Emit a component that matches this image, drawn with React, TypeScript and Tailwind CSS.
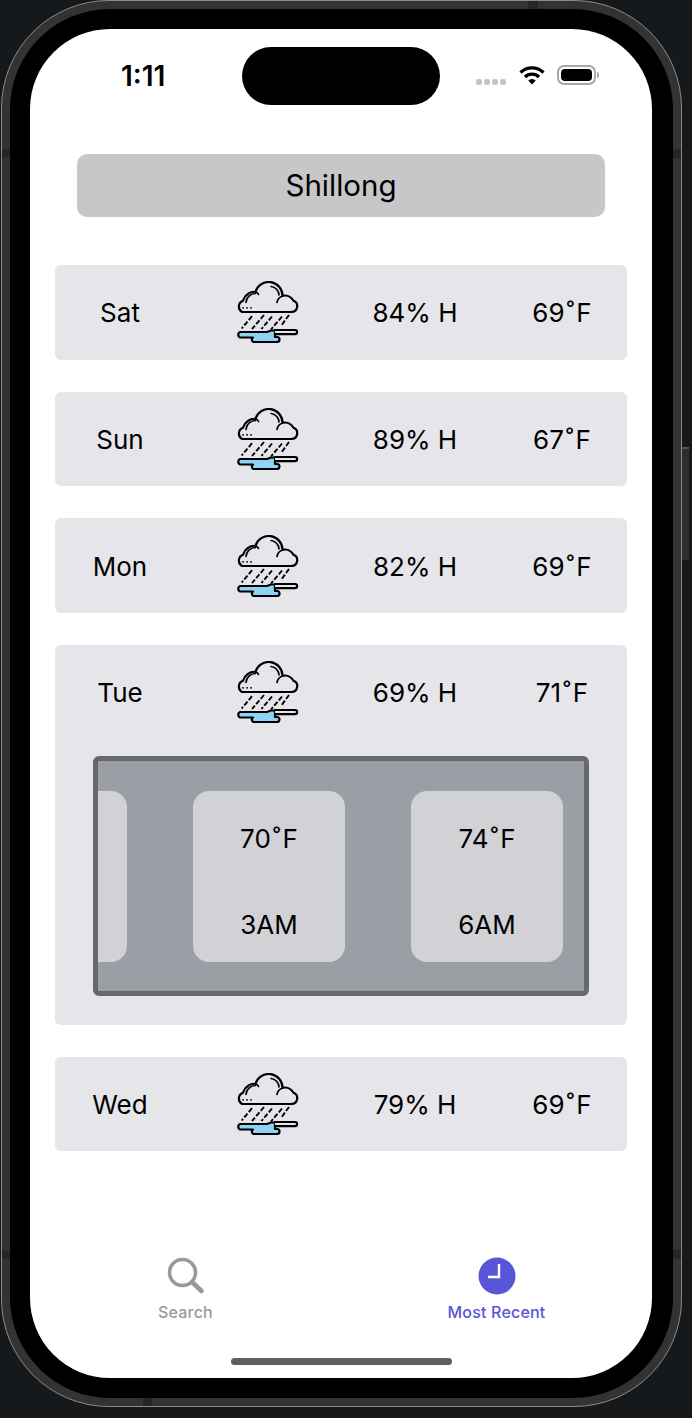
import React from "react";

// the forecast rows shown on the page
const days = [
  { day: "Sat", humidity: "84% H", temp: "69" },
  { day: "Sun", humidity: "89% H", temp: "67" },
  { day: "Mon", humidity: "82% H", temp: "69" },
  { day: "Tue", humidity: "69% H", temp: "71", open: true },
  { day: "Wed", humidity: "79% H", temp: "69" },
];

const RainIcon: React.FC = () => (
  <svg viewBox="18 11.500 62 62" className="w-[62px] h-[62px]" fill="none" stroke="#000" strokeWidth="2.200" strokeLinecap="round" strokeLinejoin="round">
    <path d="M23 42.500H72.500a5.800 5.800 0 0 0 2-11.200 10 10 0 0 0-11-5 13.800 13.800 0 0 0-27-4 12 12 0 0 0-12.500 9 6.200 6.200 0 0 0-1 11.200z" fill="#e5e5ea" />
    <path d="M27 33a9.500 9.500 0 0 1 9.500-9M52 17a9 9 0 0 1 8 8.500M58 33a8 8 0 0 1 6-6.500M37 22.500a4 4 0 0 1 2.500 2.500" strokeWidth="1.700" />
    <path d="M24 38.300h.1M28 38.300h.1M32 38.300h.1" strokeWidth="1.800" />
    <path d="M33 46.700l-10.300 12.300M45 45.500l-12 14M53 47l-10.500 12.500M63 47l-11 13M70 45.500l-8 11" strokeWidth="1.900" strokeDasharray="5 2" strokeLinecap="butt" />
    <path d="M21 62.500H48l4-1.500h4v6.500h2a2.500 2.500 0 0 1 0 5H36a2.500 2.500 0 0 1-2-4.500H21a3 3 0 0 1 0-5.500z" fill="#8fd3f4" />
    <path d="M56 60.500H76a2.100 2.100 0 0 1 0 4.200H56" fill="#e5e5ea" />
  </svg>
);

// the ring in the reference sits apart from the digits and the F
const Temp: React.FC<{ value: string }> = ({ value }) => (
  <span>
    {value}
    <span className="mx-[2px]">˚</span>F
  </span>
);

const HourCard: React.FC<{ temp?: string; time?: string; className?: string }> = ({ temp, time, className }) => (
  <div className={`w-[152px] h-[171px] shrink-0 rounded-2xl bg-[#d1d1d6] flex flex-col items-center justify-between pt-[28px] pb-[17px] text-[26px] leading-[40px] ${className || ""}`}>
    <span>{temp && <Temp value={temp} />}</span>
    <span>{time}</span>
  </div>
);

const App: React.FC = () => {
  return (
    <div className="relative w-[692px] h-[1418px] bg-[#16191c] pl-px overflow-hidden font-['Inter',sans-serif] text-black">
      {/* side button */}
      <div className="absolute left-[682px] top-[447px] w-[7px] h-[113px] bg-[#2d2d2d] border-t-2 border-[#555555]" />

      {/* phone body */}
      <div className="relative w-[681px] h-[1407px] rounded-[108px] border border-[#8a8a8a] bg-[#333333] p-[8px]">
        {/* antenna lines on the band */}
        <div className="absolute left-0 top-[148px] w-[8px] h-[9px] bg-[#262626]" />
        <div className="absolute left-0 top-[1249px] w-[8px] h-[9px] bg-[#262626]" />
        <div className="absolute right-0 top-[148px] w-[8px] h-[9px] bg-[#262626]" />
        <div className="absolute right-0 top-[1249px] w-[8px] h-[9px] bg-[#262626]" />
        <div className="absolute left-[526px] top-0 w-[10px] h-[8px] bg-[#262626]" />
        <div className="absolute left-[141px] bottom-0 w-[9px] h-[8px] bg-[#262626]" />

        <div className="relative w-full h-full rounded-[100px] bg-black pt-[20px] pl-[20px]">
          {/* screen */}
          <div className="relative w-[622px] h-[1349px] rounded-[80px] bg-white overflow-hidden flex flex-col">
            <div className="absolute top-[18px] left-[212px] w-[198px] h-[58px] rounded-full bg-black" />

            {/* status bar */}
            <div className="h-[125px] shrink-0 relative">
              <span className="absolute left-[91px] top-[30px] text-[28px] leading-[34px] font-semibold">1:11</span>
              <div className="absolute left-[446px] top-[50px] flex gap-[2px]">
                <span className="w-[6px] h-[6px] rounded-[2px] bg-[#c4c4c4]" />
                <span className="w-[6px] h-[6px] rounded-[2px] bg-[#c4c4c4]" />
                <span className="w-[6px] h-[6px] rounded-[2px] bg-[#c4c4c4]" />
                <span className="w-[6px] h-[6px] rounded-[2px] bg-[#c4c4c4]" />
              </div>
              <svg viewBox="0 0 26 20" className="absolute left-[489px] top-[36px] w-[26px] h-[20px]" fill="none" stroke="#000" strokeWidth="3.200">
                <path d="M1.500 7.500a16.500 16.500 0 0 1 23 0" />
                <path d="M6 12a10 10 0 0 1 14 0" />
                <path d="M13 19.500l-3.800-4a5.500 5.500 0 0 1 7.600 0z" fill="#000" stroke="none" />
              </svg>
              <div className="absolute left-[527px] top-[36px] w-[39px] h-[20px] rounded-[7px] border-2 border-[#a8a8a8] p-[2px]">
                <div className="w-full h-full rounded-[4px] bg-black" />
              </div>
              <span className="absolute left-[567px] top-[43px] w-[2px] h-[6px] rounded-r-full bg-[#a8a8a8]" />
            </div>

            {/* city name */}
            <div className="mx-[47px] h-[63px] shrink-0 rounded-[10px] bg-[#c7c7c9] flex items-center justify-center text-[29.500px]">
              Shillong
            </div>

            {/* forecast list */}
            <div className="mt-[48px] mx-[25px] flex flex-col gap-[32px]">
              {days.map((item) => (
                <div key={item.day} className="rounded-md bg-[#e5e5ea]">
                  <div className="h-[94.670px] grid grid-cols-[130px_166px_128px_148px] items-center text-[26px] text-center">
                    <span className="pt-[1px]">{item.day}</span>
                    <div className="flex justify-center">
                      <RainIcon />
                    </div>
                    <span className="pt-[1px]">{item.humidity}</span>
                    <span className="pl-[18px] pt-[1px]">
                      <Temp value={item.temp} />
                    </span>
                  </div>
                  {item.open && (
                    <div className="mx-[38px] mt-[16px] mb-[29px] h-[240px] rounded-md border-[5px] border-[#686868] bg-[#9a9ea5] flex items-start pt-[30px] gap-[66px] overflow-hidden">
                      <HourCard className="-ml-[123px]" />
                      <HourCard temp="70" time="3AM" />
                      <HourCard temp="74" time="6AM" />
                    </div>
                  )}
                </div>
              ))}
            </div>

            {/* tab bar */}
            <div className="mt-auto grid grid-cols-2 text-[16px] tracking-[0.2px] font-medium pb-[56px]">
              <div className="flex flex-col items-center text-[#999999]">
                <svg viewBox="0 0 38 38" className="w-[38px] h-[38px]" fill="none" stroke="#999999" strokeWidth="3.500" strokeLinecap="round">
                  <circle cx="15.500" cy="15.500" r="13" />
                  <path d="M25 25l9.500 9" strokeWidth="4.500" />
                </svg>
                <span className="mt-[7px] leading-[20px]">Search</span>
              </div>
              <div className="flex flex-col items-center text-[#5856d6]">
                <svg viewBox="0 0 38 38" className="w-[38px] h-[38px]">
                  <circle cx="19" cy="19" r="18.500" fill="#5856d6" />
                  <path d="M21 7v13h-11" fill="none" stroke="#fff" strokeWidth="2.400" />
                </svg>
                <span className="mt-[7px] leading-[20px]">Most Recent</span>
              </div>
            </div>

            <div className="absolute left-[201px] top-[1329px] w-[221px] h-[7px] rounded-full bg-[#5f5f5f]" />
          </div>
        </div>
      </div>
    </div>
  );
};

export default App;
